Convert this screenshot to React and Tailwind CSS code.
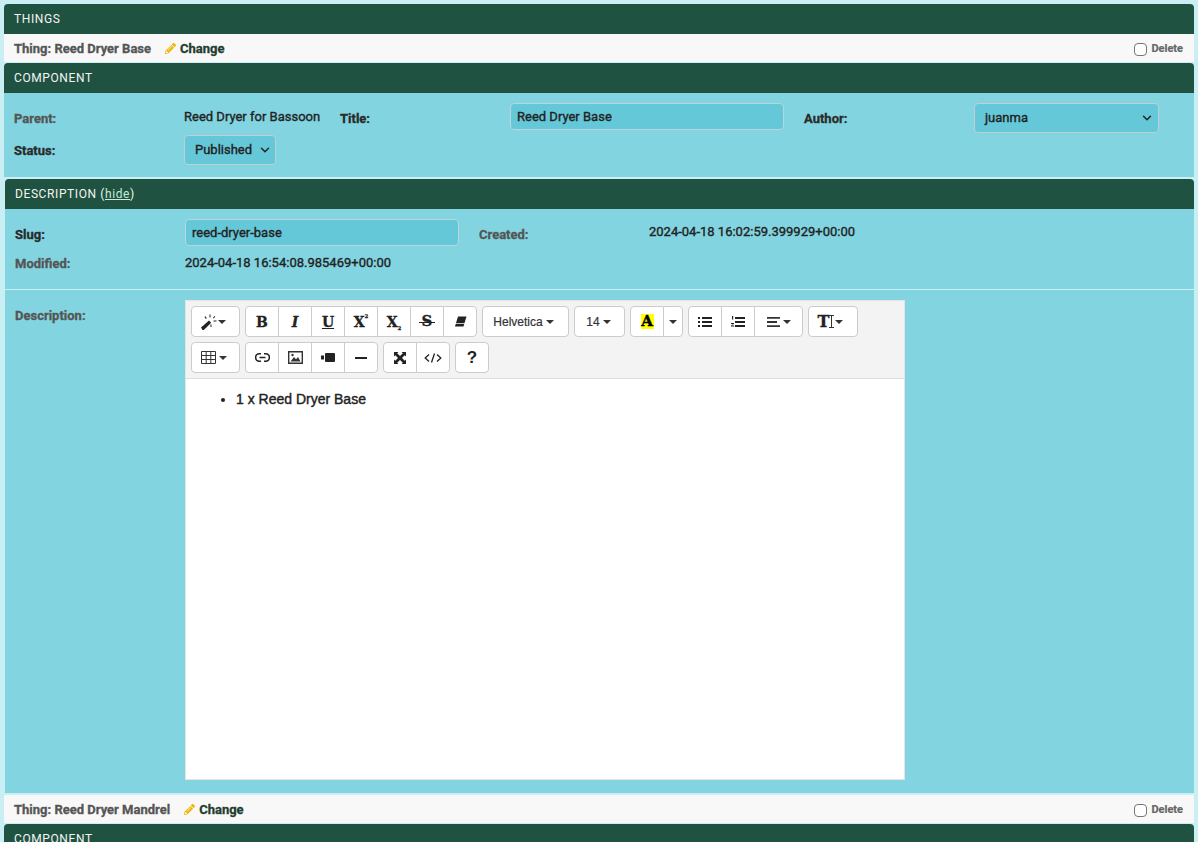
import React from 'react';
import { FaPencilAlt } from 'react-icons/fa';
import { ChevronDown } from 'lucide-react';

const Caret = ({ className = 'ml-[3px]' }) => (
    <span className={`inline-block w-0 h-0 border-x-[4px] border-x-transparent border-t-[4px] border-t-[#333] ${className}`}></span>
);

// toolbar buttons overlap by one pixel inside a group, the first one keeps its margin
const Btn = ({ w = 'w-[34px]', className = '', children }) => (
    <div className={`${w} h-[31px] flex items-center justify-center text-[#333] bg-white border border-[#ccc] -ml-px first:ml-0 first:rounded-l last:rounded-r ${className}`}>
        {children}
    </div>
);

const Group = ({ children }) => <div className="flex">{children}</div>;

const Letter = ({ children, sub, sup, className = 'text-[14px]' }) => (
    <span className={`font-['DejaVu_Serif',serif] font-bold leading-none text-[#222] [-webkit-text-stroke:0.3px_#222] ${className}`}>
        {children}
        {sup && <sup className="text-[5px] align-[6px]">{sup}</sup>}
        {sub && <sub className="text-[5px] align-[-2px]">{sub}</sub>}
    </span>
);

const WandIcon = () => (
    <svg width="18" height="16" viewBox="0 0 18 16" fill="#222">
        <path d="M0 13.5 8 6.5l2.2 2.2-7.4 7.3H1.5z" />
        <path d="M8.5 0.5h1v3h-1zM3.5 3l1-.7 1.3 2-.9.6zM12 3.8l1.6-1.8.7.6-1.6 1.8zM12.5 6.5h3v1h-3zM9.5 10.5h1v2.5h-1z" />
    </svg>
);

const EraserIcon = () => (
    <svg width="13" height="11" viewBox="0 0 13 11" fill="#222">
        <path d="M4 .5h8.5l-2 6.5H2z" />
        <path d="M1.8 7.7h8.5l-.8 2.8H1z" />
    </svg>
);

const LinkIcon = () => (
    <svg width="15" height="9" viewBox="0 0 15 9" fill="none" stroke="#222" strokeWidth="1.6">
        <path d="M6 .8H4.3a3.7 3.7 0 0 0 0 7.4H6M9 .8h1.7a3.7 3.7 0 0 1 0 7.4H9M4.5 4.5h6" />
    </svg>
);

const TableIcon = () => (
    <svg width="15" height="13" viewBox="0 0 15 13" fill="none" stroke="#333" strokeWidth="1">
        <path d="M.5.5h14v12H.5zM.5 4.5h14M.5 8.5h14M5.2.5v12M9.8.5v12" />
    </svg>
);

const PictureIcon = () => (
    <svg width="15" height="13" viewBox="0 0 15 13">
        <path fill="none" stroke="#333" strokeWidth="1.4" d="M.7.7h13.6v11.6H.7z" />
        <path fill="#333" d="M2.5 10.5 6 6l2 2.2L10 6l2.5 4.5z" />
        <circle cx="4.5" cy="4" r="1.2" fill="#333" />
    </svg>
);

const VideoIcon = () => (
    <svg width="14" height="9" viewBox="0 0 14 9" fill="#222">
        <rect x="4" y="0" width="10" height="9" rx="1" />
        <rect x="0" y="2.5" width="3" height="4" />
    </svg>
);

const ExpandIcon = () => (
    <svg width="12" height="12" viewBox="0 0 12 12" fill="#222">
        <path d="M0 0h4.5L3.2 1.3 6 4l2.8-2.7L7.5 0H12v4.5l-1.3-1.3L8 6l2.7 2.8L12 7.5V12H7.5l1.3-1.3L6 8l-2.8 2.7L4.5 12H0V7.5l1.3 1.3L4 6 1.3 3.2 0 4.5z" />
    </svg>
);

const CodeIcon = () => (
    <svg width="18" height="10" viewBox="0 0 18 10" fill="none" stroke="#222" strokeWidth="1.3">
        <path d="M5 1.5 1.2 5 5 8.5M13 1.5 16.8 5 13 8.5M10.5 .5l-3 9" />
    </svg>
);

const ListUlIcon = () => (
    <svg width="14" height="10" viewBox="0 0 14 10" fill="#222">
        <path d="M0 0h2v2H0zM0 4h2v2H0zM0 8h2v2H0zM4 0h10v2H4zM4 4h10v2H4zM4 8h10v2H4z" />
    </svg>
);

const ListOlIcon = () => (
    <svg width="14" height="12" viewBox="0 0 14 12" fill="#222">
        <path d="M1 0h1.2v3.5H1zM0 7h3v.8L1 9.5h2.2v1H0v-.8l2-1.8H0zM4 1h10v2H4zM4 5h10v2H4zM4 9h10v2H4z" />
    </svg>
);

const AlignIcon = () => (
    <svg width="13" height="10" viewBox="0 0 13 10" fill="#333">
        <path d="M0 0h13v1.8H0zM0 4.1h10v1.8H0zM0 8.2h13V10H0z" />
    </svg>
);

const IBeamIcon = () => (
    <svg width="5" height="13" viewBox="0 0 5 13" fill="none" stroke="#333" strokeWidth="1">
        <path d="M0 .5h5M0 12.5h5M2.5.5v12" />
    </svg>
);

const Toolbar = () => (
    <div className="bg-[#f3f3f3] border-b border-[#ddd] h-[78px] pt-[5px] pl-[5px] flex flex-col gap-[5px]">
        <div className="flex gap-[5px]">
            <Group><Btn w="w-[49px]" className="pr-[4px]"><WandIcon /><Caret className="-ml-px" /></Btn></Group>
            <Group>
                <Btn><Letter>B</Letter></Btn>
                <Btn><Letter className="text-[14px] italic">I</Letter></Btn>
                <Btn><Letter className="text-[14px] underline">U</Letter></Btn>
                <Btn><Letter sup="2">X</Letter></Btn>
                <Btn><Letter sub="2">X</Letter></Btn>
                <Btn>
                    <span className="relative flex items-center justify-center">
                        <Letter className="text-[15px]">S</Letter>
                        <span className="absolute left-[-3px] right-[-3px] top-1/2 h-[1.5px] bg-[#222]"></span>
                    </span>
                </Btn>
                <Btn><EraserIcon /></Btn>
            </Group>
            <Group><Btn w="w-[87px]" className="pr-[4px]"><span className="text-[12px] font-['Liberation_Sans',sans-serif] [-webkit-text-stroke:0.2px_#333]">Helvetica</span><Caret /></Btn></Group>
            <Group><Btn w="w-[51px]" className="pr-[2px]"><span className="text-[12px] font-['Liberation_Sans',sans-serif] [-webkit-text-stroke:0.2px_#333]">14</span><Caret /></Btn></Group>
            <Group>
                <Btn>
                    <span className="w-[13px] h-[15px] bg-[#ff0] flex items-center justify-center text-black font-['DejaVu_Serif',serif] font-bold text-[15px] leading-none [-webkit-text-stroke:0.4px_#000]">A</span>
                </Btn>
                <Btn w="w-[20px]"><Caret className="" /></Btn>
            </Group>
            <Group>
                <Btn><ListUlIcon /></Btn>
                <Btn><ListOlIcon /></Btn>
                <Btn w="w-[49px]"><AlignIcon /><Caret /></Btn>
            </Group>
            <Group>
                <Btn w="w-[50px]" className="pr-[5px]">
                    <Letter className="text-[16px]">T</Letter>
                    <IBeamIcon />
                    <Caret className="ml-px" />
                </Btn>
            </Group>
        </div>
        <div className="flex gap-[5px]">
            <Group><Btn w="w-[49px]" className="pr-[3px]"><TableIcon /><Caret /></Btn></Group>
            <Group>
                <Btn><LinkIcon /></Btn>
                <Btn><PictureIcon /></Btn>
                <Btn><VideoIcon /></Btn>
                <Btn><span className="w-[12px] h-[2px] bg-[#222]"></span></Btn>
            </Group>
            <Group>
                <Btn><ExpandIcon /></Btn>
                <Btn><CodeIcon /></Btn>
            </Group>
            <Group>
                <Btn><span className="text-[17px] font-bold leading-none text-[#222] font-['Liberation_Sans',sans-serif]">?</span></Btn>
            </Group>
        </div>
    </div>
);

const Header = ({ children, className = '' }) => (
    <div className={`h-[30px] shrink-0 bg-[#1f5240] rounded-tr rounded-tl text-[#f4f4f4] text-[12px] tracking-[0.6px] flex items-center pl-[10px] ${className}`}>
        {children}
    </div>
);

const ThingRow = ({ name }) => (
    <div className="h-[28px] shrink-0 bg-[#f8f8f8] flex items-center pl-[10px] pr-[11px] pt-px text-[13px] font-bold">
        <span className="text-[#555] [-webkit-text-stroke:0.3px_#555]">Thing: {name}</span>
        <FaPencilAlt size={11} className="text-[#efb80b] ml-[14px] mr-[4px]" />
        <span className="text-[#1f3d30] [-webkit-text-stroke:0.3px_#1f3d30]">Change</span>
        <span className="ml-auto flex items-center text-[11px] text-[#666] mt-px [-webkit-text-stroke:0.2px_#666]">
            <input type="checkbox" readOnly className="appearance-none w-[13px] h-[13px] bg-white border border-[#767676] rounded-sm mr-[4px]" />
            Delete
        </span>
    </div>
);

const Label = ({ dim, className = '', children }) => (
    <div className={`w-[170px] shrink-0 text-[13px] font-bold ${dim ? 'text-[#555] [-webkit-text-stroke:0.3px_#555]' : 'text-[#2a2a2a] [-webkit-text-stroke:0.3px_#2a2a2a]'} ${className}`}>{children}</div>
);

const valueText = "text-[13px] font-normal [-webkit-text-stroke:0.35px_#222]";

const App = () => (
    <div className="h-[842px] overflow-hidden bg-[#c9eef4] px-[4px] pt-[4px] font-['Roboto',sans-serif] flex flex-col">
        <Header>THINGS</Header>
        <ThingRow name="Reed Dryer Base" />
        <Header className="mt-px">COMPONENT</Header>

        <div className="bg-[#81d4e0] h-[84px] shrink-0 pl-[10px] pt-[10px] text-[#222]">
            <div className="flex items-center h-[30px]">
                <Label dim className="mt-[1px]">Parent:</Label>
                <div className={`w-[156px] shrink-0 -mt-[3px] ${valueText}`}>Reed Dryer for Bassoon</div>
                <Label className="mt-[1px]">Title:</Label>
                <div className={`w-[274px] h-[27px] shrink-0 -mt-[3px] bg-[#65c8d8] border border-[#b8d6dc] rounded px-[6px] flex items-center ${valueText}`}>Reed Dryer Base</div>
                <div className="w-[20px] shrink-0"></div>
                <Label className="mt-[1px]">Author:</Label>
                <div className={`w-[185px] h-[30px] shrink-0 bg-[#65c8d8] border border-[#bfcfd3] rounded pl-[10px] pr-[4px] flex items-center justify-between ${valueText}`}>
                    juanma
                    <ChevronDown size={14} strokeWidth={2.5} />
                </div>
            </div>
            <div className="flex items-center h-[30px] mt-[2px]">
                <Label className="mt-[1px]">Status:</Label>
                <div className={`w-[92px] h-[30px] bg-[#65c8d8] border border-[#bfcfd3] rounded pl-[10px] pr-[3px] flex items-center justify-between ${valueText}`}>
                    Published
                    <ChevronDown size={14} strokeWidth={2.5} />
                </div>
            </div>
        </div>

        <div className="h-[2px] shrink-0 bg-[#c9f0f6]"></div>

        <Header className="ml-px pl-[10px]">
            <span>DESCRIPTION (<span className="underline text-[#c8ecd8]">hide</span>)</span>
        </Header>

        <div className="bg-[#81d4e0] h-[584px] shrink-0 ml-px text-[#222] flex flex-col">
            <div className="pl-[10px] pt-[10px] h-[81px] shrink-0 border-b border-[#c9f0f6]">
                <div className="flex items-center h-[27px]">
                    <Label className="mt-[4px]">Slug:</Label>
                    <div className={`w-[274px] h-[27px] shrink-0 bg-[#65c8d8] border border-[#b8d6dc] rounded px-[6px] flex items-center ${valueText}`}>reed-dryer-base</div>
                    <div className="w-[20px] shrink-0"></div>
                    <Label dim className="mt-[4px]">Created:</Label>
                    <div className={`-mt-[1px] ${valueText}`}>2024-04-18 16:02:59.399929+00:00</div>
                </div>
                <div className="flex items-center h-[27px] mt-[3px]">
                    <Label dim className="mt-[3px]">Modified:</Label>
                    <div className={`mt-[1px] ${valueText}`}>2024-04-18 16:54:08.985469+00:00</div>
                </div>
            </div>
            <div className="flex pl-[10px] pt-[10px]">
                <Label dim className="pt-[6px]">Description:</Label>
                <div className="w-[720px] h-[480px] bg-white border border-[#e4e4e4] flex flex-col">
                    <Toolbar />
                    <ul className="list-disc pl-[50px] pt-[10px] text-[14px] leading-[20px] text-[#222] font-['Liberation_Sans',sans-serif] [-webkit-text-stroke:0.4px_#222]">
                        <li>1 x Reed Dryer Base</li>
                    </ul>
                </div>
            </div>
        </div>

        <div className="h-[2px] shrink-0 bg-[#c9f0f6]"></div>
        <ThingRow name="Reed Dryer Mandrel" />
        <Header className="mt-px">COMPONENT</Header>
    </div>
);

export default App;
